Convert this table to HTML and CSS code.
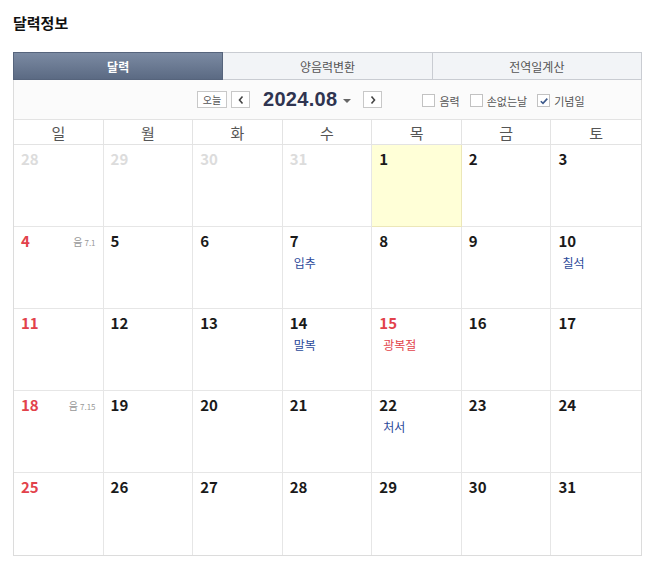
FILE: index.html
```html
<!DOCTYPE html>
<html lang="ko">
<head>
<meta charset="utf-8">
<link rel="stylesheet" href="styles.css">
</head>
<body>
<div class="page">
  <h1 class="title">달력정보</h1>
  <div class="box">
    <div class="tabs">
      <div class="tab active">달력</div>
      <div class="tab">양음력변환</div>
      <div class="tab">전역일계산</div>
    </div>
    <div class="toolbar">
      <div class="nav">
        <span class="btn today">오늘</span>
        <span class="btn arrow"><svg width="8" height="10" viewBox="0 0 8 10"><path d="M5.5 1.5 L2.5 5 L5.5 8.5" fill="none" stroke="#444" stroke-width="1.6"/></svg></span>
        <span class="month">2024.08</span>
        <span class="caret"></span>
        <span class="btn arrow"><svg width="8" height="10" viewBox="0 0 8 10"><path d="M2.5 1.5 L5.5 5 L2.5 8.5" fill="none" stroke="#444" stroke-width="1.6"/></svg></span>
      </div>
      <div class="checks">
        <label class="chk"><span class="box-c"></span>음력</label>
        <label class="chk"><span class="box-c"></span>손없는날</label>
        <label class="chk"><span class="box-c checked"><svg width="10" height="10" viewBox="0 0 10 10"><path d="M1.8 5.2 L4 7.4 L8.3 2.6" fill="none" stroke="#3d5a8c" stroke-width="1.6"/></svg></span>기념일</label>
      </div>
    </div>
    <div class="week">
      <div>일</div><div>월</div><div>화</div><div>수</div><div>목</div><div>금</div><div>토</div>
    </div>
    <div class="grid">
      <div class="cell"><span class="num other">28</span></div>
      <div class="cell"><span class="num other">29</span></div>
      <div class="cell"><span class="num other">30</span></div>
      <div class="cell"><span class="num other">31</span></div>
      <div class="cell today-cell"><span class="num">1</span></div>
      <div class="cell"><span class="num">2</span></div>
      <div class="cell"><span class="num">3</span></div>

      <div class="cell"><div class="top"><span class="num red">4</span><span class="lunar">음<small>7.1</small></span></div></div>
      <div class="cell"><span class="num">5</span></div>
      <div class="cell"><span class="num">6</span></div>
      <div class="cell"><span class="num">7</span><span class="ev">입추</span></div>
      <div class="cell"><span class="num">8</span></div>
      <div class="cell"><span class="num">9</span></div>
      <div class="cell"><span class="num">10</span><span class="ev">칠석</span></div>

      <div class="cell"><span class="num red">11</span></div>
      <div class="cell"><span class="num">12</span></div>
      <div class="cell"><span class="num">13</span></div>
      <div class="cell"><span class="num">14</span><span class="ev">말복</span></div>
      <div class="cell"><span class="num red">15</span><span class="ev red">광복절</span></div>
      <div class="cell"><span class="num">16</span></div>
      <div class="cell"><span class="num">17</span></div>

      <div class="cell"><div class="top"><span class="num red">18</span><span class="lunar">음<small>7.15</small></span></div></div>
      <div class="cell"><span class="num">19</span></div>
      <div class="cell"><span class="num">20</span></div>
      <div class="cell"><span class="num">21</span></div>
      <div class="cell"><span class="num">22</span><span class="ev">처서</span></div>
      <div class="cell"><span class="num">23</span></div>
      <div class="cell"><span class="num">24</span></div>

      <div class="cell"><span class="num red">25</span></div>
      <div class="cell"><span class="num">26</span></div>
      <div class="cell"><span class="num">27</span></div>
      <div class="cell"><span class="num">28</span></div>
      <div class="cell"><span class="num">29</span></div>
      <div class="cell"><span class="num">30</span></div>
      <div class="cell"><span class="num">31</span></div>
    </div>
  </div>
</div>
</body>
</html>
```
FILE: styles.css
```css
* { box-sizing: border-box; margin: 0; padding: 0; }
body {
  background: #fff;
  font-family: "Noto Sans CJK KR", "Noto Sans", sans-serif;
  color: #222;
}
.page { padding: 13px 19px 0 13px; width: 661px; }
.title {
  font-size: 15px;
  font-weight: bold;
  line-height: 20px;
  color: #111;
  height: 39px;
}
.box {
  width: 629px;
  border: 1px solid #dcdcdc;
  border-top: none;
}
.tabs { display: flex; height: 28px; margin: 0 -1px; }
.tab {
  flex: 1;
  display: flex;
  align-items: center;
  justify-content: center;
  font-size: 12px;
  color: #555;
  background: #f2f4f7;
  border: 1px solid #c9ccd2;
  border-left: none;
}
.tab:first-child { border-left: 1px solid #c9ccd2; }
.tab.active {
  background: linear-gradient(#7b8aa2, #5b6a83);
  border-color: #56647c;
  color: #fff;
  font-weight: bold;
}
.toolbar {
  height: 40px;
  background: #fbfbfb;
  display: flex;
  align-items: center;
  border-bottom: 1px solid #e3e3e3;
}
.nav {
  display: flex;
  align-items: center;
  margin-left: 183px;
}
.btn {
  height: 17px;
  border: 1px solid #c8c8c8;
  background: #fff;
  display: flex;
  align-items: center;
  justify-content: center;
  font-size: 10px;
  color: #555;
}
.btn.today { width: 30px; margin-right: 4px; }
.btn.arrow { width: 19px; }
.month {
  font-family: "Liberation Sans", Arial, sans-serif;
  font-weight: bold;
  font-size: 20px;
  color: #2f3450;
  margin-left: 13px;
  letter-spacing: 0.3px;
}
.caret {
  width: 0; height: 0;
  border-left: 4px solid transparent;
  border-right: 4px solid transparent;
  border-top: 4px solid #666;
  margin: 2px 12px 0 6px;
}
.checks {
  display: flex;
  align-items: center;
  margin-left: 40px;
  margin-top: 2px;
}
.chk {
  display: flex;
  align-items: center;
  font-size: 11px;
  color: #555;
  margin-right: 10px;
}
.box-c {
  width: 13px; height: 13px;
  border: 1px solid #c2c2c2;
  background: #fff;
  margin-right: 4px;
  display: flex;
  align-items: center;
  justify-content: center;
}
.week {
  display: grid;
  grid-template-columns: repeat(7, 1fr);
  height: 25px;
  border-bottom: 1px solid #e3e3e3;
}
.week div {
  display: flex;
  align-items: center;
  justify-content: center;
  font-size: 15px;
  color: #555;
  border-right: 1px solid #e3e3e3;
}
.week div:last-child { border-right: none; }
.grid {
  display: grid;
  grid-template-columns: repeat(7, 1fr);
  grid-auto-rows: 82px;
}
.cell {
  border-right: 1px solid #e6e6e6;
  border-bottom: 1px solid #e6e6e6;
  padding: 4px 7px;
  display: flex;
  flex-direction: column;
  align-items: flex-start;
}
.cell:nth-child(7n) { border-right: none; }
.cell:nth-last-child(-n+7) { border-bottom: none; }
.today-cell { background: #ffffd7; border-color: #ece7b8; }
.top { display: flex; justify-content: space-between; align-items: center; width: 100%; }
.num {
  font-size: 15px;
  font-weight: bold;
  color: #1a1a1a;
  line-height: 20px;
}
.num.other { color: #dcdcdc; }
.num.red { color: #e2424b; }
.lunar {
  font-size: 10px;
  color: #999;
}
.lunar small { font-size: 8px; margin-left: 2px; }
.ev {
  font-size: 12px;
  color: #2b4a9a;
  margin-top: 5px;
  margin-left: 4px;
  line-height: 14px;
}
.ev.red { color: #e2424b; }
```
